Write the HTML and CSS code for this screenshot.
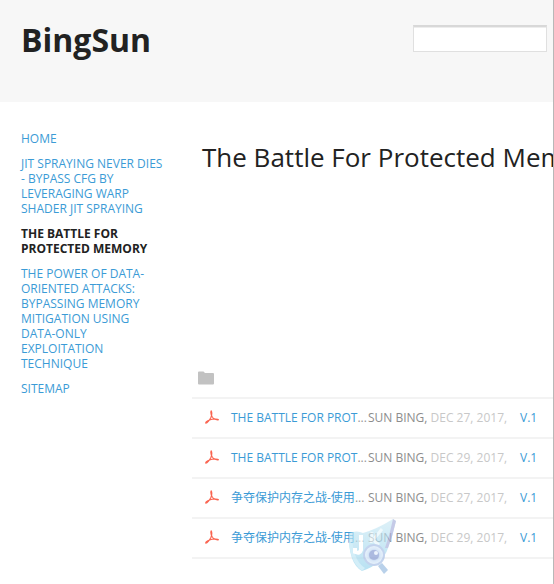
FILE: index.html
```html
<!DOCTYPE html>
<html lang="en">
<head>
  <meta charset="UTF-8">
  <meta name="viewport" content="width=device-width, initial-scale=1.0">
  <title>The Battle For Protected Memory - BingSun</title>
  <link rel="stylesheet" href="styles.css">
</head>
<body>
  <svg class="sprite" aria-hidden="true">
    <symbol id="pdf" viewBox="0 0 14 14">
      <path d="M6.200 .8C7.200 2.200 6.800 5 6 7.300C5 9.700 2.200 13 .8 13.200C.2 12.700 1.800 10.800 4.600 9.900C7.500 8.900 12.900 8.700 13.400 9.600C12.800 10.600 8.800 9.400 7.400 7.200C6.200 5.200 5.600 2 6.200 .8Z" fill="none" stroke="#fa6450" stroke-width="1.100" stroke-linejoin="round"/>
    </symbol>
  </svg>

  <header class="header">
    <h1>BingSun</h1>
    <form class="search">
      <input type="text" id="searchInput" aria-label="Search this site">
    </form>
  </header>

  <div class="layout">
    <nav class="sidebar">
      <ul>
        <li><a href="#">Home</a></li>
        <li><a href="#">JIT Spraying Never Dies - Bypass CFG By Leveraging WARP Shader JIT Spraying</a></li>
        <li><a href="#" class="active">The Battle For Protected Memory</a></li>
        <li><a href="#">The Power Of Data-Oriented Attacks: Bypassing Memory Mitigation Using Data-Only Exploitation Technique</a></li>
        <li><a href="#">Sitemap</a></li>
      </ul>
    </nav>

    <main class="content">
      <h2>The Battle For Protected Mem</h2>
      <div class="folder">
        <svg width="16" height="14" viewBox="0 0 16 14"><path d="M0 1.500Q0 .5 1 .5H5.500L7 2H15Q16 2 16 3V12.500Q16 13.500 15 13.500H1Q0 13.500 0 12.500Z" fill="#c2c2c2"/></svg>
      </div>
      <table class="files">
        <tbody>
          <tr>
            <td class="icon"><svg width="14" height="14"><use href="#pdf"/></svg></td>
            <td class="name"><a href="#">The Battle For Prot</a>...</td>
            <td class="info"><span>Sun Bing,</span> Dec 27, 2017,</td>
            <td class="version"><a href="#">v.1</a></td>
          </tr>
          <tr>
            <td class="icon"><svg width="14" height="14"><use href="#pdf"/></svg></td>
            <td class="name"><a href="#">The Battle For Prot</a>...</td>
            <td class="info"><span>Sun Bing,</span> Dec 29, 2017,</td>
            <td class="version"><a href="#">v.1</a></td>
          </tr>
          <tr>
            <td class="icon"><svg width="14" height="14"><use href="#pdf"/></svg></td>
            <td class="name"><a href="#" lang="zh-CN">争夺保护内存之战-使用</a>...</td>
            <td class="info"><span>Sun Bing,</span> Dec 27, 2017,</td>
            <td class="version"><a href="#">v.1</a></td>
          </tr>
          <tr>
            <td class="icon"><svg width="14" height="14"><use href="#pdf"/></svg></td>
            <td class="name"><a href="#" lang="zh-CN">争夺保护内存之战-使用</a>...</td>
            <td class="info"><span>Sun Bing,</span> Dec 29, 2017,</td>
            <td class="version"><a href="#">v.1</a></td>
          </tr>
        </tbody>
      </table>

      <!-- watermark over the file list -->
      <svg class="watermark" width="50" height="58" viewBox="0 0 50 58" aria-hidden="true">
        <defs>
          <linearGradient id="shield" x1="0" y1="0" x2="0" y2="1">
            <stop offset="0" stop-color="#cdeaf5"/>
            <stop offset="1" stop-color="#93d2ec"/>
          </linearGradient>
          <radialGradient id="lens">
            <stop offset="0" stop-color="#7187c2"/>
            <stop offset=".35" stop-color="#91aee0"/>
            <stop offset=".6" stop-color="#c5dcf5"/>
            <stop offset="1" stop-color="#e2effb"/>
          </radialGradient>
        </defs>
        <path d="M1 15Q9 12 15 15Q29 11 45 1L48 3Q45 17 40 30Q35 46 14 53Q0 45 1 15Z" fill="url(#shield)"/>
        <path d="M45 1L48 3Q45 17 40 30L37 30Q42 16 45 1Z" fill="#a7aedb"/>
        <path d="M1 16Q0 42 14 53L17 50Q4 42 4 15Z" fill="#bce6f5"/>
        <path d="M13 17V32Q12 36 7 34V30" fill="none" stroke="#fff" stroke-width="4"/>
        <path d="M24 14L23 25M34 11L25 22L31 27" fill="none" stroke="#e8f6fb" stroke-width="3"/>
        <path d="M30 48L34 45L40 52L36 56Z" fill="#95b9df"/>
        <circle cx="26" cy="37" r="10" fill="url(#lens)" stroke="#a4bde5" stroke-width="2"/>
        <circle cx="26" cy="37" r="5" fill="#8196d0"/>
        <circle cx="28" cy="35" r="2" fill="#e4effd"/>
      </svg>
    </main>
  </div>
</body>
</html>
```

FILE: styles.css
```css
* {
  box-sizing: border-box;
}

body {
  margin: 0;
  min-height: 100vh;
  font-family: "Open Sans", "Noto Sans CJK SC", sans-serif;
  font-size: 12px;
  color: #222;
  background-color: #fff;
  border-right: 1px solid #b8b8b8;
}

a {
  color: #3b9bd6;
  text-decoration: none;
}

a:hover {
  text-decoration: underline;
}

.sprite {
  display: none;
}

.header {
  display: flex;
  justify-content: space-between;
  align-items: flex-start;
  height: 102px;
  padding: 18px 6px 0 21px;
  background-color: #f7f7f7;
}

.header h1 {
  margin: 0;
  font-size: 32px;
  line-height: 44px;
}

.search {
  padding-top: 7px;
}

.search input {
  display: block;
  width: 134px;
  height: 27px;
  padding: 0 6px;
  font: inherit;
  background-color: #fff;
  border: 1px solid #e0e0e0;
  border-top: 2px solid #d8d8d8;
  box-shadow: inset 0 1px 0 #ededed;
}

.layout {
  display: grid;
  grid-template-columns: 166px minmax(0, 1fr);
  column-gap: 26px;
}

.sidebar {
  padding: 29px 0 0 21px;
}

.sidebar ul {
  display: flex;
  flex-direction: column;
  gap: 10px;
  margin: 0;
  padding: 0;
  list-style: none;
}

.sidebar li {
  line-height: 15px;
  text-transform: uppercase;
}

.sidebar .active {
  color: #222;
  font-weight: bold;
}

.content {
  position: relative;
  padding-top: 35px;
}

.content h2 {
  margin: 0;
  padding-left: 10px;
  font-size: 26px;
  font-weight: normal;
  line-height: 40px;
  white-space: nowrap;
  overflow: hidden;
}

.folder {
  display: flex;
  height: 220px;
  padding: 0 0 12px 6px;
  align-items: flex-end;
}

.files {
  width: 100%;
  table-layout: fixed;
  border-collapse: collapse;
  border-top: 2px solid #f3f3f3;
  text-transform: uppercase;
  white-space: nowrap;
}

.files td {
  height: 40px;
  padding: 0 0 2px;
  border-bottom: 2px solid #f3f3f3;
}

.files svg {
  display: block;
}

.files .icon {
  width: 39px;
  padding-left: 13px;
}

.files .name {
  width: 137px;
  color: #999;
}

.files .info {
  color: #c8c8c8;
}

.files .info span {
  color: #8c8c8c;
}

.files .version {
  width: 33px;
}

.watermark {
  position: absolute;
  right: 155px;
  bottom: -17px;
  opacity: 0.65;
}
```
